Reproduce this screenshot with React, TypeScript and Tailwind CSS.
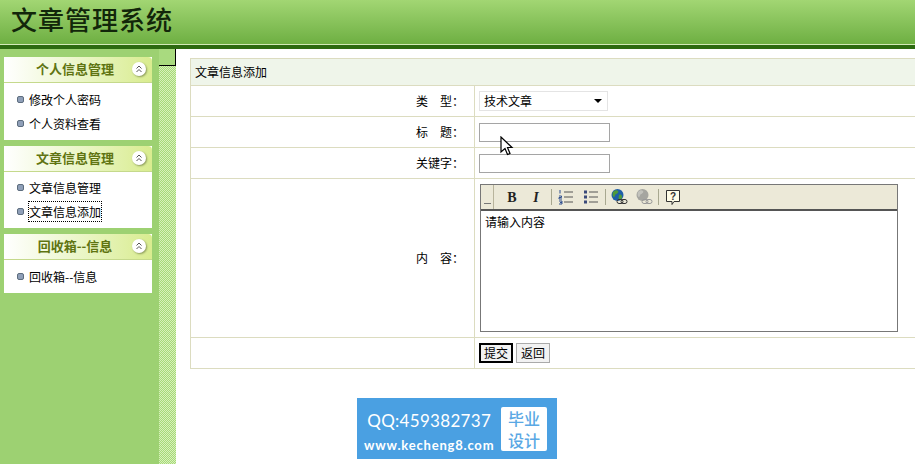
const sans = "font-['Noto_Sans_CJK_SC','Liberation_Sans',sans-serif]"

function Collapse() {
  return (
    <span className="ml-auto w-[14px] h-[14px] rounded-full bg-white shadow-[1px_1px_2px_#8a9a5a] flex items-center justify-center">
      <svg width="8" height="8" viewBox="0 0 8 8" fill="none" stroke="#555" strokeWidth="1">
        <path d="M1.5 3.5 4 1l2.5 2.5M1.5 7 4 4.5 6.5 7" />
      </svg>
    </span>
  )
}

function Bullet() {
  return <span className="w-[7px] h-[7px] rounded-[2px] bg-[#8f9fb8] border border-[#5d6d7e] shrink-0" />
}

function SideMenu({ title, items, focused, body }: { title: string; items: string[]; focused?: string; body: string }) {
  return (
    <div className="bg-white w-[148px] mb-[6px]">
      <div className="h-[26px] rounded-t-[4px] bg-gradient-to-r from-white to-[#d9ec8f] border-b border-[#c5d98c] flex items-center pl-[32px] pr-[6px] pb-[2px]">
        <span className="w-[78px] whitespace-nowrap text-center text-[13px] font-bold text-[#5f7412] leading-none">{title}</span>
        <Collapse />
      </div>
      <div className={`px-[13px] ${body}`}>
        {items.map((item) => (
          <div key={item} className="h-[24px] flex items-center gap-[5px] text-[12px] text-black">
            <Bullet />
            <span className={item === focused ? 'outline-1 outline-dotted outline-black leading-[19px]' : 'leading-[15px]'}>{item}</span>
          </div>
        ))}
      </div>
    </div>
  )
}

function Row({ label, h, children }: { label?: string; h: string; children: React.ReactNode }) {
  return (
    <div className={`flex border-b border-[#dcdcc0] ${h}`}>
      <div className="w-[284px] shrink-0 border-r border-[#dcdcc0] flex items-center justify-end pr-[10px] text-[12px] text-black">
        {label}
      </div>
      <div className="flex-1 pl-[4px] flex items-center">{children}</div>
    </div>
  )
}

function Sep({ ml }: { ml: string }) {
  return <span className={`block w-px h-[16px] bg-[#a8a890] ${ml}`} />
}

function Toolbar() {
  return (
    <div className="h-[26px] bg-[#ece9d8] border-b-2 border-[#555] flex items-center">
      <div className="w-[13px] h-full border-r border-[#b8b49c] flex items-end justify-center pb-[5px]">
        <span className="w-[7px] h-px bg-[#777]" />
      </div>
      <div className="flex items-center pl-[10px]">
        <span className="w-[16px] text-center text-[14px] font-bold font-['Liberation_Serif',serif] text-[#222]">B</span>
        <span className="w-[16px] ml-[8px] text-center text-[14px] font-bold italic font-['Liberation_Serif',serif] text-[#222]">I</span>
        <Sep ml="ml-[7px]" />
        <svg width="16" height="16" viewBox="0 0 16 16" className="ml-[6px]">
          <path d="M2 1v3.500M1 7h2.500v1.500H1V10h3M1 12h3v1.500H2M4 13.500V15H1" fill="none" stroke="#2f4f8f" />
          <path d="M6 3h9M6 8h9M6 13h9" stroke="#555" />
        </svg>
        <svg width="16" height="16" viewBox="0 0 16 16" className="ml-[9px]">
          <path d="M1 1.500h3v3H1zM1 6.500h3v3H1zM1 11.500h3v3H1z" fill="#3a4a7a" />
          <path d="M6 3h9M6 8h9M6 13h9" stroke="#555" />
        </svg>
        <Sep ml="ml-[6px]" />
        <svg width="18" height="18" viewBox="0 0 18 18" className="ml-[4px]">
          <circle cx="7.500" cy="7" r="6" fill="#1f5fa8" />
          <path d="M3 4c2-2 4-2 5-1s-1 3-2 3-1 3-2 3-2-2-1-5zM9 7c2-1 3 0 3 2s-2 3-3 2 0-3 0-4z" fill="#4f9a3a" />
          <rect x="7" y="11.500" width="6" height="4" rx="2" fill="none" stroke="#333" />
          <rect x="11" y="11.500" width="6" height="4" rx="2" fill="none" stroke="#333" />
        </svg>
        <svg width="18" height="18" viewBox="0 0 18 18" className="ml-[7px]">
          <circle cx="7.500" cy="7" r="6" fill="#a5a5a0" />
          <path d="M3 4c2-2 4-2 5-1s-1 3-2 3-1 3-2 3-2-2-1-5z" fill="#c2c2bc" />
          <rect x="7" y="11.500" width="6" height="4" rx="2" fill="none" stroke="#999" />
          <rect x="11" y="11.500" width="6" height="4" rx="2" fill="none" stroke="#999" />
        </svg>
        <Sep ml="ml-[5px]" />
        <svg width="16" height="17" viewBox="0 0 16 17" className="ml-[6px]">
          <path d="M1.500 1.500h13v11H9l-2 3v-3H1.500z" fill="#fffde8" stroke="#333" />
          <text x="8" y="10.500" textAnchor="middle" fontSize="10" fontWeight="bold" fontFamily="Liberation Sans" fill="#333">?</text>
        </svg>
      </div>
    </div>
  )
}

export default function App() {
  return (
    <div className={`relative w-[915px] h-[464px] overflow-hidden bg-white flex flex-col ${sans}`}>
      <header className="h-[49px] shrink-0 flex flex-col">
        <div className="h-[44px] bg-gradient-to-b from-[#a2d673] to-[#6fb043] flex items-center pl-[11px] pb-[5px] border-b border-[#6fb043]">
          <h1 className="text-[26px] leading-none font-medium tracking-[1px] text-[#12260a]">文章管理系统</h1>
        </div>
        <div className="h-px bg-[#d3eab8]" />
        <div className="h-[4px] bg-[#2c6a10]" />
      </header>

      <div className="flex-1 flex min-h-0">
        <aside className="w-[159px] shrink-0 bg-[#9dd172] pl-[4px] pt-[8px]">
          <SideMenu title="个人信息管理" items={['修改个人密码', '个人资料查看']} body="pt-[4px] pb-[5px]" />
          <SideMenu title="文章信息管理" items={['文章信息管理', '文章信息添加']} focused="文章信息添加" body="pt-[3px] pb-[5px]" />
          <SideMenu title="回收箱--信息" items={['回收箱--信息']} body="pt-[4px] pb-[5px]" />
        </aside>

        <div className="w-[17px] shrink-0 bg-[repeating-conic-gradient(#a6da78_0_25%,#d8f0bc_0_50%)] bg-[length:2px_2px]">
          <div className="h-[17px] bg-[#a9da7f] border-r border-b border-black" />
        </div>

        <main className="flex-1 min-w-0 pl-[14px] pt-[9px] overflow-hidden">
          <div className="w-[760px] border-t border-l border-[#dcdcc0]">
            <div className="h-[27px] bg-[#eff5ea] border-b border-[#dcdcc0] flex items-center pl-[4px] pb-[1px] text-[12px] text-black">文章信息添加</div>
            <Row label="类　型：" h="h-[31px]">
              <div className="w-[129px] h-[20px] bg-white border border-[#e4e4e4] flex items-center pl-[4px] pr-[5px] justify-between text-[12px] text-black">
                技术文章
                <span className="w-0 h-0 border-x-[4px] border-x-transparent border-t-[4px] border-t-black" />
              </div>
            </Row>
            <Row label="标　题：" h="h-[31px]">
              <div className="w-[131px] h-[19px] bg-white border border-[#a5a5a5]" />
            </Row>
            <Row label="关键字：" h="h-[31px]">
              <div className="w-[131px] h-[19px] bg-white border border-[#a5a5a5]" />
            </Row>
            <Row label="内　容：" h="h-[159px]">
              <div className="w-[418px] h-[148px] ml-[1px] border border-[#777] flex flex-col">
                <Toolbar />
                <div className="flex-1 px-[4px] py-[2px] text-[12px] text-black">请输入内容</div>
              </div>
            </Row>
            <Row h="h-[31px]">
              <div className="flex gap-[3px]">
                <span className="w-[34px] h-[20px] bg-[#f2f2f2] border-2 border-black flex items-center justify-center text-[12px] text-black">提交</span>
                <span className="w-[34px] h-[20px] bg-[#f2f2f2] border border-[#aaa] flex items-center justify-center text-[12px] text-black">返回</span>
              </div>
            </Row>
          </div>

          <div className="ml-[167px] mt-[29px] w-[200px] h-[61px] bg-[#4aa0e2] flex items-center pl-[7px] pr-[10px] justify-between text-white">
            <div className="flex flex-col items-center pt-[8px] font-['Lato',sans-serif]">
              <span className="text-[17px] font-normal tracking-[0.3px] leading-[25px]">QQ:459382737</span>
              <span className="text-[13px] font-bold tracking-[0.8px] leading-[25px]">www.kecheng8.com</span>
            </div>
            <div className="w-[46px] h-[44px] bg-white rounded-[2px] flex flex-col items-center justify-center text-[#5aa8e4] text-[16px] font-medium leading-[22px]">
              <span>毕业</span>
              <span>设计</span>
            </div>
          </div>
        </main>
      </div>

      {/* mouse pointer caught in the screenshot */}
      <svg width="14" height="21" viewBox="0 0 14 21" className="absolute left-[500px] top-[136px]">
        <path d="M1 1v15l4-3.500 2.500 6 2.500-1-2.500-6H12z" fill="#fff" stroke="#000" strokeWidth="1.200" />
      </svg>
    </div>
  )
}
